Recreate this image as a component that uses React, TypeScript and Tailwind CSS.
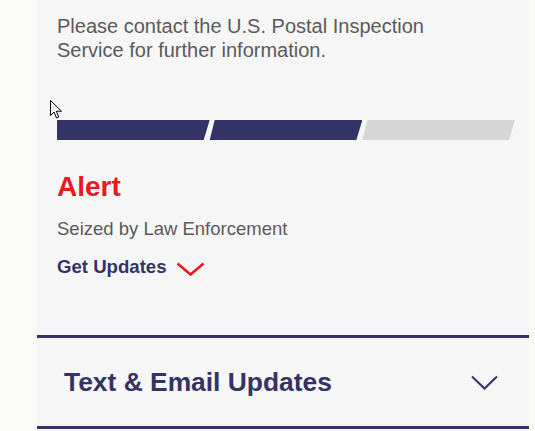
import React from "react";

export default function App() {
  return (
    <div
      className="relative h-[431px] w-[535px] overflow-hidden bg-[#fafaf7]"
      style={{ fontFamily: '"Liberation Sans", Arial, Helvetica, sans-serif' }}
    >
      <div className="ml-[37px] flex h-full w-[492px] flex-col bg-[#f6f6f6]">
        <div className="pl-[20px] pr-[14px]">
          <p className="pt-[14px] text-[20px] leading-[24px] text-[#5a5a5a]">
            Please contact the U.S. Postal Inspection
            <br />
            Service for further information.
          </p>

          <div className="mt-[58px] flex h-[20px] w-[458px]">
            <div className="h-full flex-1 bg-[#333366] [clip-path:polygon(0_0,100%_0,calc(100%-6px)_100%,0_100%)]" />
            <div className="h-full flex-1 bg-[#333366] [clip-path:polygon(5px_0,100%_0,calc(100%-6px)_100%,0_100%)]" />
            <div className="h-full flex-1 bg-[#d6d6d6] [clip-path:polygon(5px_0,100%_0,calc(100%-6px)_100%,0_100%)]" />
          </div>

          <h2 className="mt-[31px] text-[28px] font-bold leading-[32px] text-[#e71921]">
            Alert
          </h2>
          <p className="mt-[14px] text-[18.5px] leading-[24px] text-[#5a5a5a]">
            Seized by Law Enforcement
          </p>
          <div className="mt-[14px] flex h-[24px] items-center gap-[9px]">
            <span className="text-[18.6px] font-bold leading-[24px] text-[#333366]">
              Get Updates
            </span>
            <svg width="29" height="14" viewBox="0 0 29 14" className="mt-[3px]">
              <path
                d="M1.5 1.5 L14.5 12.5 L27.5 1.5"
                fill="none"
                stroke="#e71921"
                strokeWidth="2.6"
              />
            </svg>
          </div>
        </div>

        <div className="mt-[56px] border-y-[3px] border-[#333366]">
          <div className="flex h-[88px] items-center justify-between pl-[27px] pr-[31px]">
            <span className="text-[26.4px] font-bold leading-[30px] text-[#333366]">
              Text &amp; Email Updates
            </span>
            <svg width="27" height="15" viewBox="0 0 27 15">
              <path
                d="M1 1.5 L13.5 13.5 L26 1.5"
                fill="none"
                stroke="#333366"
                strokeWidth="2"
              />
            </svg>
          </div>
        </div>
      </div>

      <svg
        className="absolute left-[50px] top-[100px]"
        width="13"
        height="20"
        viewBox="0 0 13 20"
      >
        <path
          d="M0.5 0.5 L0.5 15.5 L4 12 L6.5 18 L8.8 17 L6.3 11.2 L11.5 11.2 Z"
          fill="#ffffff"
          stroke="#000000"
          strokeWidth="1"
          strokeLinejoin="round"
        />
      </svg>
    </div>
  );
}
